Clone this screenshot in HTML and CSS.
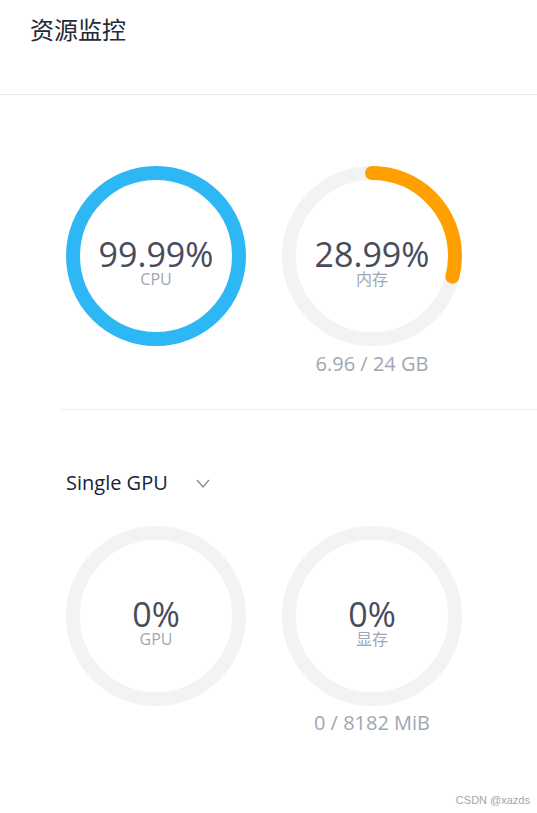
FILE: index.html
```html
<!DOCTYPE html>
<html lang="zh">
<head>
<meta charset="utf-8">
<title>资源监控</title>
<link rel="stylesheet" href="styles.css">
</head>
<body>
<div class="page">
  <header class="header">
    <h1 class="title">资源监控</h1>
  </header>

  <section class="row row-top">
    <div class="gauge">
      <div class="ring">
        <svg class="ring-svg" viewBox="0 0 180 180" width="180" height="180">
          <circle cx="90" cy="90" r="83" class="track"/>
          <circle cx="90" cy="90" r="83" class="bar bar-blue" stroke-dasharray="521.5 521.5" stroke-dashoffset="0.05"/>
        </svg>
        <div class="ring-text">
          <div class="value">99.99%</div>
          <div class="label">CPU</div>
        </div>
      </div>
    </div>
    <div class="gauge">
      <div class="ring">
        <svg class="ring-svg" viewBox="0 0 180 180" width="180" height="180">
          <circle cx="90" cy="90" r="83" class="track"/>
          <circle cx="90" cy="90" r="83" class="bar bar-orange" stroke-dasharray="151.2 521.5"/>
        </svg>
        <div class="ring-text">
          <div class="value">28.99%</div>
          <div class="label">内存</div>
        </div>
      </div>
      <div class="caption">6.96 / 24 GB</div>
    </div>
  </section>

  <div class="divider"></div>

  <div class="select">
    <span class="select-text">Single GPU</span>
    <svg class="chevron" viewBox="0 0 14 9" width="14" height="9">
      <polyline points="1,1 7,8 13,1" fill="none" stroke="#808695" stroke-width="1.2"/>
    </svg>
  </div>

  <section class="row row-gpu">
    <div class="gauge">
      <div class="ring">
        <svg class="ring-svg" viewBox="0 0 180 180" width="180" height="180">
          <circle cx="90" cy="90" r="83" class="track"/>
        </svg>
        <div class="ring-text">
          <div class="value">0%</div>
          <div class="label">GPU</div>
        </div>
      </div>
    </div>
    <div class="gauge">
      <div class="ring">
        <svg class="ring-svg" viewBox="0 0 180 180" width="180" height="180">
          <circle cx="90" cy="90" r="83" class="track"/>
        </svg>
        <div class="ring-text">
          <div class="value">0%</div>
          <div class="label">显存</div>
        </div>
      </div>
      <div class="caption">0 / 8182 MiB</div>
    </div>
  </section>

  <div class="watermark">CSDN @xazds</div>
</div>
</body>
</html>
```

FILE: styles.css
```css
* { box-sizing: border-box; }
html, body { margin: 0; padding: 0; background: #fff; }
body {
  font-family: "Open Sans", "Noto Sans CJK SC", sans-serif;
  color: #464c5b;
}
.page {
  position: relative;
  width: 537px;
  height: 813px;
  overflow: hidden;
}
.header {
  height: 95px;
  border-bottom: 1px solid #e8eaec;
  padding: 13px 0 0 30px;
}
.title {
  margin: 0;
  font-family: "Noto Sans CJK SC", sans-serif;
  font-weight: 400;
  font-size: 24px;
  line-height: 32px;
  color: #262a33;
}
.row {
  display: flex;
  gap: 36px;
  padding-left: 66px;
}
.row-top { margin-top: 71px; }
.row-gpu { margin-top: 31px; }
.gauge {
  display: flex;
  flex-direction: column;
  align-items: center;
  width: 180px;
}
.ring {
  display: grid;
  width: 180px;
  height: 180px;
}
.ring > * { grid-area: 1 / 1; }
.ring-svg { display: block; transform: rotate(-90deg); }
.track {
  fill: none;
  stroke: #f3f3f3;
  stroke-width: 14;
}
.bar {
  fill: none;
  stroke-width: 14;
  stroke-linecap: round;
}
.bar-blue { stroke: #2db7f5; stroke-linecap: butt; }
.bar-orange { stroke: #ff9f00; }
.ring-text {
  display: flex;
  flex-direction: column;
  align-items: center;
  justify-content: center;
  padding-top: 14px;
}
.value {
  font-size: 34px;
  line-height: 32px;
  color: #464c5b;
}
.label {
  font-family: "Open Sans", "Noto Sans CJK SC", sans-serif;
  font-size: 16px;
  line-height: 18px;
  color: #9ea7b4;
}
.caption {
  margin-top: 6px;
  font-size: 20px;
  line-height: 24px;
  color: #9ea7b4;
}
.row-gpu .caption { margin-top: 5px; }
.divider {
  margin: 33px 0 0 60px;
  height: 1px;
  background: #eeeff1;
}
.select {
  display: flex;
  align-items: center;
  gap: 28px;
  margin: 61px 0 0 66px;
  height: 24px;
}
.select-text {
  font-size: 20px;
  line-height: 24px;
  color: #17233d;
}
.chevron { display: block; margin-top: 1px; }
.watermark {
  position: absolute;
  right: 7px;
  bottom: 7px;
  font-family: "Liberation Sans", sans-serif;
  font-size: 11px;
  line-height: 12px;
  color: #a5a5a5;
}
```
